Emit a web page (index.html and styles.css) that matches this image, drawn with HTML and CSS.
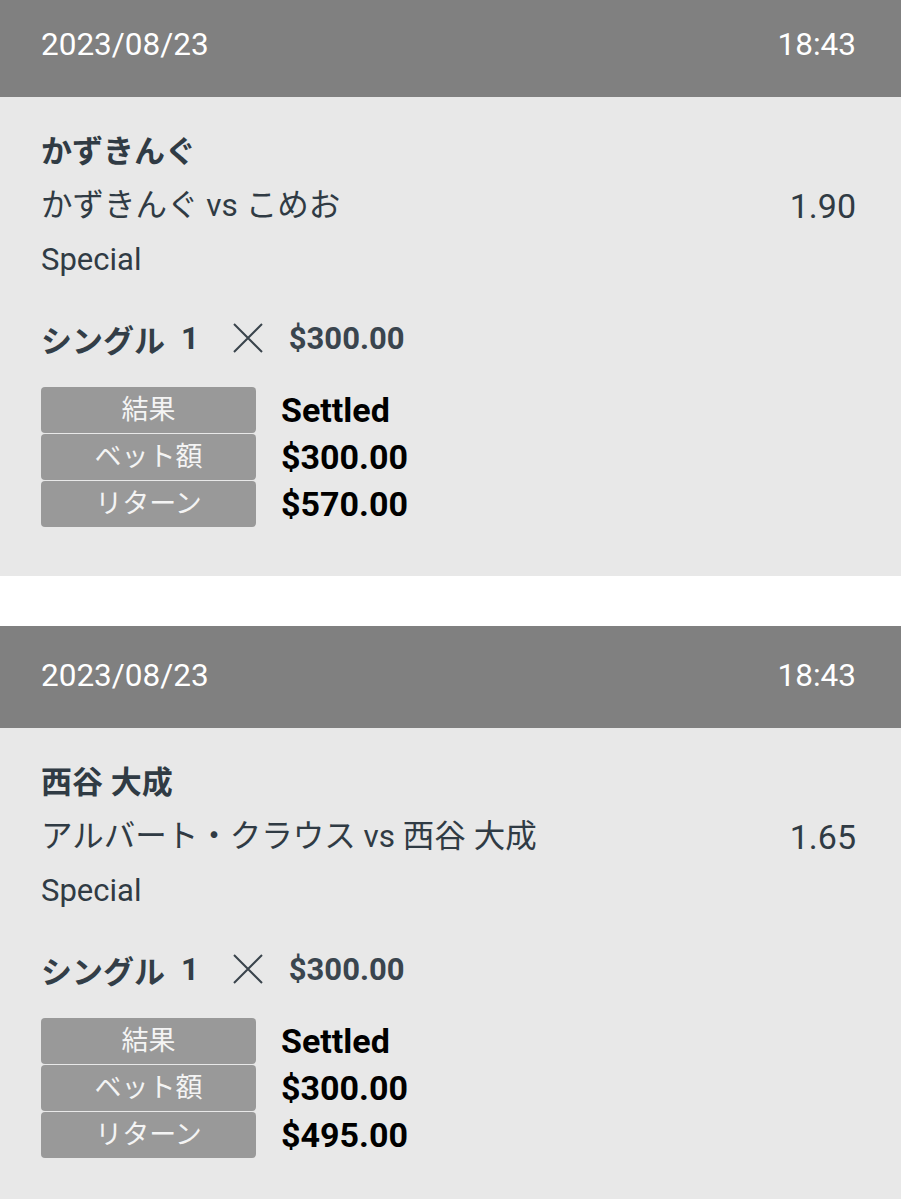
FILE: index.html
```html
<!DOCTYPE html>
<html lang="ja">
<head>
    <meta charset="UTF-8">
    <meta name="viewport" content="width=device-width, initial-scale=1.0">
    <title>ベット履歴</title>
    <link rel="stylesheet" href="styles.css">
</head>
<body>
    <div class="history">
        <div class="bet">
            <div class="bet-header">
                <span>2023/08/23</span>
                <span>18:43</span>
            </div>
            <div class="bet-body">
                <div class="selection">かずきんぐ</div>
                <div class="event">
                    <span>かずきんぐ vs こめお</span>
                    <span class="odds">1.90</span>
                </div>
                <div class="market">Special</div>
                <div class="stake-line">
                    <span class="bet-type">シングル</span>
                    <span class="bet-count">1</span>
                    <svg class="times" width="30" height="30" viewBox="0 0 30 30">
                        <path d="M1 1 L29 29 M29 1 L1 29" stroke="#3a444c" stroke-width="2" fill="none"/>
                    </svg>
                    <span class="stake">$300.00</span>
                </div>
                <div class="summary">
                    <div class="labels">
                        <div class="label">結果</div>
                        <div class="label">ベット額</div>
                        <div class="label">リターン</div>
                    </div>
                    <div class="values">
                        <div class="value">Settled</div>
                        <div class="value">$300.00</div>
                        <div class="value">$570.00</div>
                    </div>
                </div>
            </div>
        </div>

        <div class="bet">
            <div class="bet-header">
                <span>2023/08/23</span>
                <span>18:43</span>
            </div>
            <div class="bet-body">
                <div class="selection">西谷 大成</div>
                <div class="event">
                    <span>アルバート・クラウス vs 西谷 大成</span>
                    <span class="odds">1.65</span>
                </div>
                <div class="market">Special</div>
                <div class="stake-line">
                    <span class="bet-type">シングル</span>
                    <span class="bet-count">1</span>
                    <svg class="times" width="30" height="30" viewBox="0 0 30 30">
                        <path d="M1 1 L29 29 M29 1 L1 29" stroke="#3a444c" stroke-width="2" fill="none"/>
                    </svg>
                    <span class="stake">$300.00</span>
                </div>
                <div class="summary">
                    <div class="labels">
                        <div class="label">結果</div>
                        <div class="label">ベット額</div>
                        <div class="label">リターン</div>
                    </div>
                    <div class="values">
                        <div class="value">Settled</div>
                        <div class="value">$300.00</div>
                        <div class="value">$495.00</div>
                    </div>
                </div>
            </div>
        </div>
    </div>
</body>
</html>
```

FILE: styles.css
```css
body {
    margin: 0;
    background: #ffffff;
    font-family: Roboto, "Noto Sans CJK JP", sans-serif;
    color: #303b44;
}
.history {
    display: flex;
    flex-direction: column;
    gap: 50px;
    margin-top: -5px;
}
.bet-header {
    display: flex;
    justify-content: space-between;
    align-items: center;
    height: 102px;
    padding: 0 45px 0 41px;
    background: #808080;
    color: #ffffff;
    font-size: 31.5px;
    box-sizing: border-box;
}
.bet-header span {
    margin-top: -4px;
}
.bet-body {
    background: #e8e8e8;
    padding: 28px 45px 49px 41px;
}
.selection {
    font-size: 31px;
    font-weight: bold;
    line-height: 54px;
}
.event {
    display: flex;
    justify-content: space-between;
    font-size: 31.5px;
    line-height: 54px;
}
.odds {
    font-size: 34px;
}
.market {
    font-size: 31px;
    line-height: 54px;
}
.stake-line {
    display: flex;
    align-items: center;
    height: 54px;
    margin-top: 24px;
    font-size: 31px;
    font-weight: bold;
    color: #333e47;
}
.bet-count {
    margin-left: 16px;
}
.times {
    margin-left: 34px;
    margin-right: 26px;
}
.stake {
    font-size: 31px;
    color: #3a454e;
}
.summary {
    display: flex;
    gap: 25px;
    margin-top: 22px;
}
.labels {
    display: flex;
    flex-direction: column;
    gap: 1px;
    width: 215px;
}
.label {
    height: 46px;
    line-height: 46px;
    background: #999999;
    border-radius: 4px;
    color: #f4f4f4;
    font-size: 27px;
    text-align: center;
}
.values {
    display: flex;
    flex-direction: column;
    gap: 1px;
}
.value {
    height: 46px;
    line-height: 46px;
    font-size: 34px;
    font-weight: bold;
    color: #000000;
}
```
